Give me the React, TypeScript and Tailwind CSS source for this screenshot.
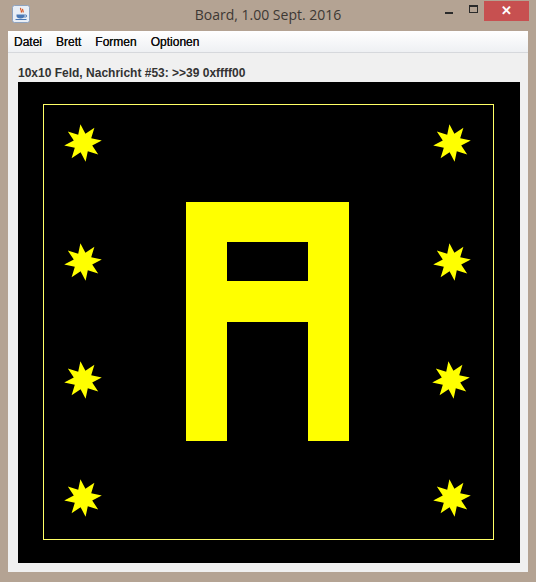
import React from "react";

const W = 502;
const H = 481;

const starPoints = (cx: number, cy: number, ro: number, ri: number, rot: number) => {
  const pts: string[] = [];
  for (let i = 0; i < 16; i++) {
    const r = i % 2 === 0 ? ro : ri;
    const a = ((rot + i * 22.5) * Math.PI) / 180;
    pts.push(`${(cx + r * Math.sin(a)).toFixed(1)},${(cy - r * Math.cos(a)).toFixed(1)}`);
  }
  return pts.join(" ");
};

const STARS = [
  [65, 61],
  [434, 61],
  [65, 180],
  [434, 180],
  [65, 298],
  [433, 298],
  [65, 416],
  [434, 416],
];

const JavaIcon = () => (
  <svg width="18" height="18" viewBox="0 0 18 18">
    <rect x="0.5" y="0.5" width="17" height="17" rx="2" fill="#e8eef6" stroke="#8fa3bf" />
    <path d="M9 3c-2 1.5 2 2.5 0 4.5M11 4c-1.5 1 1 2 0 3.5" stroke="#d9541e" strokeWidth="1.2" fill="none" />
    <path d="M4.5 9.5h8v1.5c0 1.5-1.5 2.5-4 2.5s-4-1-4-2.5z" fill="#4a78b5" />
    <path d="M12.5 10h1.2a1 1 0 0 1 0 2h-1.5" stroke="#4a78b5" fill="none" />
    <path d="M3.5 14.5h11" stroke="#4a78b5" strokeWidth="1" />
  </svg>
);

export default function App() {
  return (
    <div className="w-[536px] h-[582px] bg-[#b4a393] flex flex-col font-['Liberation_Sans',Arial,sans-serif]">
      {/* title bar */}
      <div className="h-[31px] flex items-start relative shrink-0">
        <div className="ml-[12px] mt-[5px]">
          <JavaIcon />
        </div>
        <div className="absolute left-0 right-0 top-[5px] text-center text-[14px] text-[#3d3833] font-['Open_Sans',sans-serif] leading-[20px]">
          Board, 1.00 Sept. 2016
        </div>
        <div className="ml-auto flex items-start">
          <div className="w-[27px] h-[21px] flex items-center justify-center">
            <div className="w-[8px] h-[2px] bg-[#2a2a2a] mt-[4px]" />
          </div>
          <div className="w-[22px] h-[21px] flex items-center justify-center">
            <div className="w-[9px] h-[8px] border border-[#2a2a2a] border-t-2 -mt-[4px]" />
          </div>
          <div className="w-[45px] h-[20px] mt-[1px] mr-[7px] bg-[#c75050] flex items-center justify-center text-white text-[13px] font-bold">
            ✕
          </div>
        </div>
      </div>

      {/* client area */}
      <div className="flex-1 mx-[8px] mb-[10px] flex flex-col bg-[#f0f0f0]">
        <div className="h-[22px] shrink-0 bg-gradient-to-b from-white to-[#eef0f3] border-b border-[#d6d8dc] flex items-center gap-[14px] px-[6px] text-[12px] text-[#111] [text-shadow:0_0_0.3px_#111]">
          <span>Datei</span>
          <span>Brett</span>
          <span>Formen</span>
          <span>Optionen</span>
        </div>
        <div className="px-[10px] pt-[12px] text-[12px] font-bold text-[#333] leading-[16px] h-[29px]">
          10x10 Feld, Nachricht #53: &gt;&gt;39 0xffff00
        </div>
        <div className="ml-[10px] w-[502px] h-[481px] bg-black">
          <svg width={W} height={H} viewBox={`0 0 ${W} ${H}`}>
            <rect x="25.5" y="22.5" width="450" height="435" fill="none" stroke="#ffff66" strokeWidth="1" />
            <path
              d="M168 120H331V359H290V240H209V359H168Z M209 160H290V199H209Z"
              fill="#ffff00"
              fillRule="evenodd"
            />
            {STARS.map(([x, y], i) => (
              <polygon key={i} points={starPoints(x, y, 19, 9.5, -8)} fill="#ffff00" />
            ))}
          </svg>
        </div>
      </div>
    </div>
  );
}
